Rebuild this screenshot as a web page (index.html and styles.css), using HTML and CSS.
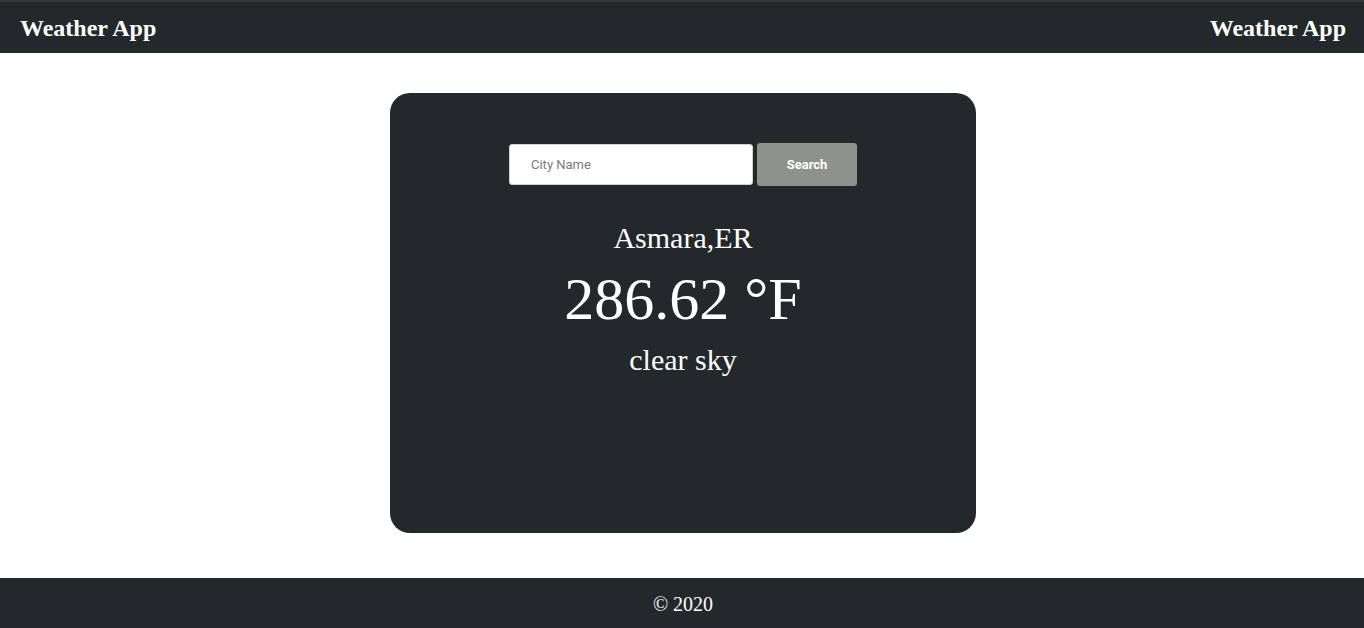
FILE: index.html
```html
<!DOCTYPE html>
<html>
<head>
<meta charset="utf-8">
<title>Weather App</title>
<link rel="stylesheet" href="styles.css">
</head>
<body>
<header class="topbar">
  <span class="brand">Weather App</span>
  <span class="brand">Weather App</span>
</header>
<main class="main">
  <section class="card">
    <form class="search">
      <input class="city" type="text" placeholder="City Name">
      <button class="btn" type="button">Search</button>
    </form>
    <div class="city-name">Asmara,ER</div>
    <div class="temp">286.62 °F</div>
    <div class="desc">clear sky</div>
  </section>
</main>
<footer class="footer">© 2020</footer>
</body>
</html>
```
FILE: styles.css
```css
* { box-sizing: border-box; }
html, body { margin: 0; padding: 0; }
body {
  font-family: "Liberation Serif", "Times New Roman", serif;
  background: #ffffff;
  color: #ffffff;
  height: 628px;
  display: flex;
  flex-direction: column;
}
.topbar {
  height: 53px;
  background: #23292b;
  border-top: 2px solid #333738;
  display: flex;
  justify-content: space-between;
  align-items: center;
  padding: 0 18px 0 20px;
}
.brand {
  font-weight: bold;
  font-size: 24px;
  line-height: 28px;
  padding-top: 1px;
}
.main {
  flex: 1;
  display: flex;
  justify-content: center;
  padding: 40px 0 0 2px;
}
.card {
  width: 586px;
  height: 440px;
  background: #23292b;
  border-radius: 20px;
  padding-top: 50px;
  display: flex;
  flex-direction: column;
  align-items: center;
}
.search {
  display: flex;
  align-items: center;
  gap: 4px;
  margin: 0;
}
.city {
  width: 244px;
  height: 41px;
  border: 1px solid #cfd4d6;
  border-radius: 3px;
  padding: 0 0 0 21px;
  font-family: Roboto, "Liberation Sans", sans-serif;
  font-size: 13px;
  color: #333;
  background: #fff;
  outline: none;
}
.city::placeholder { color: #7a7a7a; }
.btn {
  width: 100px;
  height: 43px;
  border: none;
  border-radius: 3px;
  background: #8f918d;
  color: #ffffff;
  font-family: Roboto, "Liberation Sans", sans-serif;
  font-weight: bold;
  font-size: 13px;
}
.city-name {
  font-size: 30px;
  line-height: 34px;
  margin-top: 35px;
}
.temp {
  font-size: 60px;
  line-height: 68px;
  margin-top: 10px;
}
.desc {
  font-size: 30px;
  line-height: 34px;
  margin-top: 10px;
}
.footer {
  height: 50px;
  margin-top: 45px;
  background: #23292b;
  display: flex;
  align-items: center;
  justify-content: center;
  font-size: 20px;
  padding: 2px 0 0 2px;
}
```
